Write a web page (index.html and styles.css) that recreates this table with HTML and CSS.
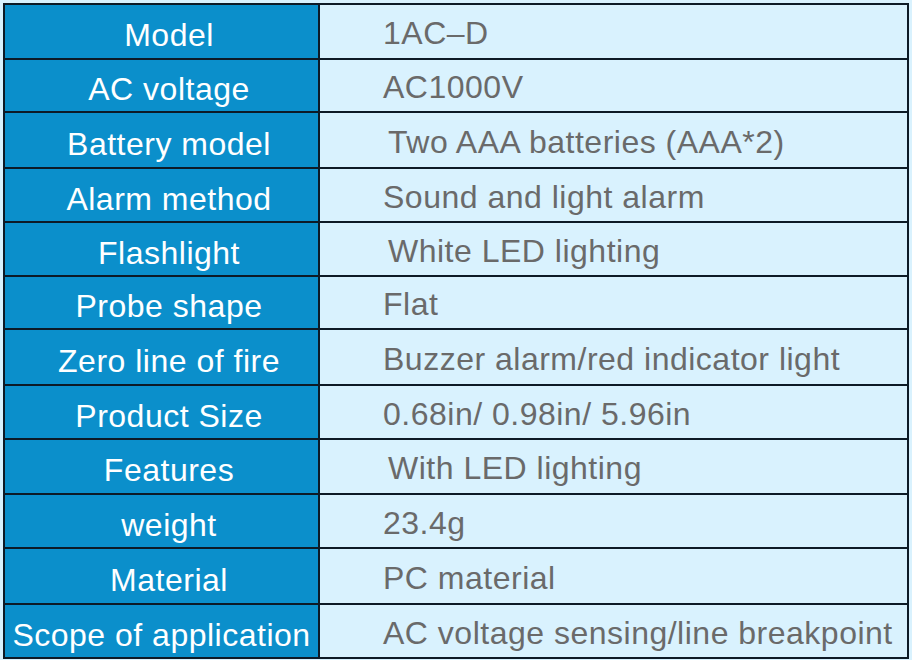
FILE: index.html
```html
<!DOCTYPE html>
<html lang="en">
<head>
<meta charset="utf-8">
<title>Specifications</title>
<link rel="stylesheet" href="styles.css">
</head>
<body>
<table class="spec">
  <tr><th>Model</th><td>1AC–D</td></tr>
  <tr><th>AC voltage</th><td>AC1000V</td></tr>
  <tr><th>Battery model</th><td class="shift">Two AAA batteries (AAA*2)</td></tr>
  <tr><th>Alarm method</th><td>Sound and light alarm</td></tr>
  <tr><th>Flashlight</th><td class="shift">White LED lighting</td></tr>
  <tr><th>Probe shape</th><td>Flat</td></tr>
  <tr><th>Zero line of fire</th><td>Buzzer alarm/red indicator light</td></tr>
  <tr><th>Product Size</th><td>0.68in/ 0.98in/ 5.96in</td></tr>
  <tr><th>Features</th><td class="shift">With LED lighting</td></tr>
  <tr><th>weight</th><td>23.4g</td></tr>
  <tr><th>Material</th><td>PC material</td></tr>
  <tr><th class="wide">Scope of application</th><td>AC voltage sensing/line breakpoint</td></tr>
</table>
</body>
</html>
```

FILE: styles.css
```css
html, body {
  margin: 0;
  padding: 0;
  background: #d9f2fe;
}

body {
  padding: 3px 0 0 3px;
  font-family: "Liberation Sans", Arial, sans-serif;
}

.spec {
  border-collapse: collapse;
  width: 906px;
  border: 2px solid #0d1a26;
}

.spec tr {
  height: 54px;
}

.spec tr:nth-child(1) { height: 55px; }
.spec tr:nth-child(2) { height: 53px; }
.spec tr:nth-child(3) { height: 56px; }
.spec tr:nth-child(6) { height: 53px; }
.spec tr:nth-child(7) { height: 56px; }
.spec tr:nth-child(9) { height: 55px; }
.spec tr:nth-child(11) { height: 56px; }

.spec th,
.spec td {
  border: 2px solid #0d1a26;
  font-size: 32px;
  letter-spacing: 0.5px;
  white-space: nowrap;
  line-height: 36px;
  vertical-align: middle;
}

.spec th {
  width: 298px;
  background: #0b8fcb;
  color: #ffffff;
  font-weight: normal;
  text-align: center;
  padding: 7px 0 0 15px;
}

.spec th.wide {
  padding-left: 0;
}

.spec td {
  background: #d9f2fe;
  color: #6a6a6a;
  text-align: left;
  padding: 3px 0 0 63px;
}

.spec td.shift {
  padding-left: 68px;
}
```
